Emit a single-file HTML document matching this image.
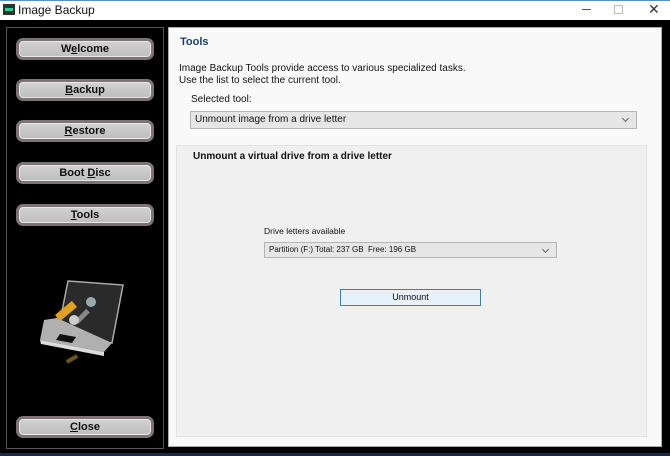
<!DOCTYPE html>
<html><head><style>
*{margin:0;padding:0;box-sizing:border-box}
body{width:670px;height:456px;background:#000;font-family:"Liberation Sans",sans-serif;position:relative;overflow:hidden}
.t{position:absolute}
.btn{position:absolute;left:16px;width:138px;height:22px;border-radius:7px;background:linear-gradient(#d2d2d2,#bdbdbd);border:3px solid #7d7276;box-shadow:inset 0 0 0 1px #e8e8e8;font-weight:bold;font-size:11px;color:#111;text-align:center;line-height:16px}
.btn u{text-decoration:underline}
.sel{position:absolute;background:#e6e6e6;border:1px solid #b5b5b5;font-size:10px;color:#111;padding-left:4px}
.sel:after{content:"";position:absolute;right:8px;top:4px;width:4px;height:4px;border-right:1px solid #666;border-bottom:1px solid #666;transform:rotate(45deg)}
</style></head><body>
<div class="t" style="left:0;top:0;width:670px;height:20px;background:#fff;border-top:1px solid #5b8fc7"></div>
<div class="t" style="left:3px;top:4px;width:12px;height:11px;background:#1d3a2a;border:1px solid #333"><div style="margin:3px 1px;height:3px;background:#3c9"></div></div>
<div class="t" style="left:18px;top:3px;font-size:12px;color:#111">Image Backup</div>
<div class="t" style="left:582px;top:9px;width:9px;height:1px;background:#555"></div>
<div class="t" style="left:614px;top:5px;width:9px;height:9px;border:1px solid #bbb"></div>
<div class="t" style="left:648px;top:1px;font-size:14px;color:#333">✕</div>

<div class="t" style="left:6px;top:27px;width:158px;height:422px;border:1px solid #555"></div>
<div class="btn" style="top:38px">W<u>e</u>lcome</div>
<div class="btn" style="top:79px"><u>B</u>ackup</div>
<div class="btn" style="top:120px"><u>R</u>estore</div>
<div class="btn" style="top:162px">Boot <u>D</u>isc</div>
<div class="btn" style="top:204px"><u>T</u>ools</div>
<div class="btn" style="top:416px"><u>C</u>lose</div>

<svg class="t" style="left:0;top:0" width="670" height="456">
<polygon points="68,281 123,285 112,343 57,336" fill="#2a2a2a" stroke="#aaa" stroke-width="1.5"/>
<polygon points="44,320 57,318 112,343 104,352 40,340" fill="#b0b0b0"/>
<polygon points="40,340 104,352 104,356 41,344" fill="#dcdcdc"/>
<polygon points="60,334 76,337 72,343 56,340" fill="#111"/>
<rect x="62" y="300" width="8" height="22" fill="#e0a020" transform="rotate(50 66 311)"/>
<rect x="80" y="308" width="5" height="16" fill="#888" transform="rotate(45 82 316)"/>
<circle cx="91" cy="302" r="5" fill="#9aa"/>
<circle cx="74" cy="320" r="5" fill="#ccc"/>
<rect x="66" y="357" width="12" height="4" fill="#6b5520" transform="rotate(-30 72 359)"/>
</svg>

<div class="t" style="left:168px;top:27px;width:494px;height:420px;background:#f9f9f9;border:1px solid #aaa"></div>
<div class="t" style="left:180px;top:36px;font-size:11px;font-weight:bold;color:#1d3f6e">Tools</div>
<div class="t" style="left:179px;top:63px;font-size:10px;color:#111;line-height:12px">Image Backup Tools provide access to various specialized tasks.<br>Use the list to select the current tool.</div>
<div class="t" style="left:191px;top:94px;font-size:10px;color:#111">Selected tool:</div>
<div class="sel" style="left:190px;top:111px;width:447px;height:18px;line-height:16px">Unmount image from a drive letter</div>
<div class="t" style="left:176px;top:145px;width:471px;height:292px;background:#f0f0f0;border:1px solid #e2e2e2"></div>
<div class="t" style="left:193px;top:151px;font-size:10px;font-weight:bold;color:#111">Unmount a virtual drive from a drive letter</div>
<div class="t" style="left:264px;top:226px;font-size:8.5px;color:#111">Drive letters available</div>
<div class="sel" style="left:264px;top:242px;width:293px;height:16px;line-height:14px;font-size:8px">Partition (F:) Total: 237 GB&nbsp; Free: 196 GB</div>
<div class="t" style="left:340px;top:289px;width:141px;height:17px;background:#e5f1fb;border:1px solid #3c7fb1;font-size:9px;text-align:center;line-height:15px;color:#111">Unmount</div>
<div class="t" style="left:0;top:453px;width:670px;height:3px;background:#1c2a44"></div>
</body></html>
